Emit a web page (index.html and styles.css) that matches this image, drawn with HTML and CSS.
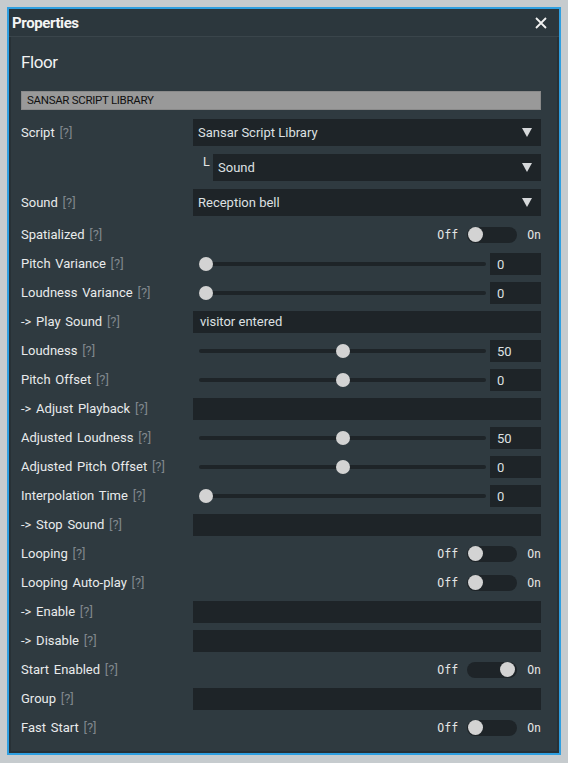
FILE: index.html
```html
<!DOCTYPE html>
<html>
<head>
<meta charset="utf-8">
<link rel="stylesheet" href="styles.css">
</head>
<body>
<div class="window">
  <div class="titlebar">
    <span class="title">Properties</span>
    <svg class="close" width="12" height="12" viewBox="0 0 12 12"><path d="M1 1 L11 11 M11 1 L1 11" stroke="#f2f2f2" stroke-width="1.8" fill="none"/></svg>
  </div>
  <div class="content">
    <div class="obj-name">Floor</div>
    <div class="section">SANSAR SCRIPT LIBRARY</div>
    <div class="top">
      <div class="label">Script <span class="help">[?]</span></div>
      <div class="select"><span>Sansar Script Library</span><span class="arrow"></span></div>
      <div></div>
      <div class="sub"><span class="ell">L</span><div class="select"><span>Sound</span><span class="arrow"></span></div></div>
      <div class="label">Sound <span class="help">[?]</span></div>
      <div class="select"><span>Reception bell</span><span class="arrow"></span></div>
    </div>
    <div class="rows">
      <div class="row"><div class="label">Spatialized <span class="help">[?]</span></div><div class="toggle"><span class="tl">Off</span><span class="track"><span class="knob"></span></span><span class="tl on">On</span></div></div>
      <div class="row"><div class="label">Pitch Variance <span class="help">[?]</span></div><div class="slider"><div class="strack"><span class="sknob" style="--v:0"></span></div><div class="num">0</div></div></div>
      <div class="row"><div class="label">Loudness Variance <span class="help">[?]</span></div><div class="slider"><div class="strack"><span class="sknob" style="--v:0"></span></div><div class="num">0</div></div></div>
      <div class="row"><div class="label">-&gt; Play Sound <span class="help">[?]</span></div><div class="text">visitor entered</div></div>
      <div class="row"><div class="label">Loudness <span class="help">[?]</span></div><div class="slider"><div class="strack"><span class="sknob" style="--v:50"></span></div><div class="num">50</div></div></div>
      <div class="row"><div class="label">Pitch Offset <span class="help">[?]</span></div><div class="slider"><div class="strack"><span class="sknob" style="--v:50"></span></div><div class="num">0</div></div></div>
      <div class="row"><div class="label">-&gt; Adjust Playback <span class="help">[?]</span></div><div class="text"></div></div>
      <div class="row"><div class="label">Adjusted Loudness <span class="help">[?]</span></div><div class="slider"><div class="strack"><span class="sknob" style="--v:50"></span></div><div class="num">50</div></div></div>
      <div class="row"><div class="label">Adjusted Pitch Offset <span class="help">[?]</span></div><div class="slider"><div class="strack"><span class="sknob" style="--v:50"></span></div><div class="num">0</div></div></div>
      <div class="row"><div class="label">Interpolation Time <span class="help">[?]</span></div><div class="slider"><div class="strack"><span class="sknob" style="--v:0"></span></div><div class="num">0</div></div></div>
      <div class="row"><div class="label">-&gt; Stop Sound <span class="help">[?]</span></div><div class="text"></div></div>
      <div class="row"><div class="label">Looping <span class="help">[?]</span></div><div class="toggle"><span class="tl">Off</span><span class="track"><span class="knob"></span></span><span class="tl on">On</span></div></div>
      <div class="row"><div class="label">Looping Auto-play <span class="help">[?]</span></div><div class="toggle"><span class="tl">Off</span><span class="track"><span class="knob"></span></span><span class="tl on">On</span></div></div>
      <div class="row"><div class="label">-&gt; Enable <span class="help">[?]</span></div><div class="text"></div></div>
      <div class="row"><div class="label">-&gt; Disable <span class="help">[?]</span></div><div class="text"></div></div>
      <div class="row"><div class="label">Start Enabled <span class="help">[?]</span></div><div class="toggle"><span class="tl">Off</span><span class="track checked"><span class="knob"></span></span><span class="tl on">On</span></div></div>
      <div class="row"><div class="label">Group <span class="help">[?]</span></div><div class="text"></div></div>
      <div class="row"><div class="label">Fast Start <span class="help">[?]</span></div><div class="toggle"><span class="tl">Off</span><span class="track"><span class="knob"></span></span><span class="tl on">On</span></div></div>
    </div>
  </div>
</div>
</body>
</html>
```

FILE: styles.css
```css
* { box-sizing: border-box; }
html, body { margin: 0; padding: 0; }
body {
  width: 568px;
  height: 763px;
  background: #c6cbce;
  font-family: Roboto, "Noto Sans", sans-serif;
  overflow: hidden;
  padding: 7px 0 0 7px;
}
.window {
  width: 554px;
  height: 748px;
  border: 2px solid #2f9fe0;
  background: #2f3a40;
  display: flex;
  flex-direction: column;
}
.titlebar {
  height: 28px;
  flex: none;
  background: #2c373d;
  border-bottom: 1px solid #3a454b;
  display: flex;
  align-items: center;
  justify-content: space-between;
  padding: 0 12px 0 3px;
}
.title {
  color: #f4f4f4;
  font-weight: bold;
  font-size: 15px;
  letter-spacing: -0.4px;
}
.close { display: block; }
.content {
  flex: 1;
  border: 2px solid #283136;
  border-top: none;
  padding: 13px 16px 0 10px;
  display: flex;
  flex-direction: column;
}
.obj-name {
  color: #f2f2f2;
  font-size: 17px;
  line-height: 24px;
  letter-spacing: -0.4px;
}
.section {
  margin-top: 17px;
  height: 19px;
  background: #999999;
  border: 1px solid #8a8a8a;
  color: #111;
  font-size: 11.5px;
  line-height: 17px;
  letter-spacing: -0.3px;
  padding-left: 5px;
}
.top {
  margin-top: 9px;
  display: grid;
  grid-template-columns: 172px 1fr;
  row-gap: 8px;
  align-items: center;
}
.label {
  color: #e9ebec;
  font-size: 13px;
  word-spacing: 1.5px;
  white-space: nowrap;
}
.help { color: #80878c; }
.select {
  height: 27px;
  background: #1e2428;
  color: #dde0e2;
  font-size: 13px;
  display: flex;
  align-items: center;
  justify-content: space-between;
  padding: 0 9px 0 5px;
}
.arrow {
  width: 0;
  height: 0;
  border-left: 5px solid transparent;
  border-right: 5px solid transparent;
  border-top: 9px solid #d6d8da;
}
.sub {
  display: flex;
  align-items: flex-start;
}
.sub .ell {
  color: #e6e6e6;
  font-size: 12.5px;
  width: 20px;
  padding-left: 10px;
  line-height: 15px;
}
.sub .select { flex: 1; }
.rows {
  margin-top: 4px;
  display: flex;
  flex-direction: column;
}
.row {
  height: 29px;
  display: grid;
  grid-template-columns: 172px 1fr;
  align-items: center;
}
.text {
  height: 22px;
  background: #1e2428;
  color: #dde0e2;
  font-size: 13px;
  line-height: 22px;
  padding-left: 7px;
}
.slider {
  display: flex;
  align-items: center;
}
.strack {
  flex: 1;
  margin-left: 6px;
  margin-right: 4px;
  height: 4px;
  border-radius: 2px;
  background: #1e2428;
  position: relative;
}
.sknob {
  position: absolute;
  top: -5px;
  left: calc((100% - 14px) * var(--v) / 100);
  width: 14px;
  height: 14px;
  border-radius: 50%;
  background: #d3d3d3;
}
.num {
  width: 51px;
  height: 22px;
  background: #1e2428;
  color: #dde0e2;
  font-size: 13px;
  line-height: 23px;
  padding-left: 7px;
}
.toggle {
  display: flex;
  align-items: center;
  justify-content: flex-end;
}
.tl {
  color: #e6e6e6;
  font-family: "DejaVu Sans Mono", monospace;
  font-size: 11.5px;
}
.tl.on { margin-left: 10px; margin-right: 0; }
.track {
  margin-left: 9px;
  width: 50px;
  height: 16px;
  border-radius: 8px;
  background: #1e2428;
  display: flex;
  align-items: center;
  padding: 0 1px;
}
.track.checked { justify-content: flex-end; padding-right: 2px; }
.knob {
  width: 15px;
  height: 15px;
  border-radius: 50%;
  background: #d3d3d3;
}
```
